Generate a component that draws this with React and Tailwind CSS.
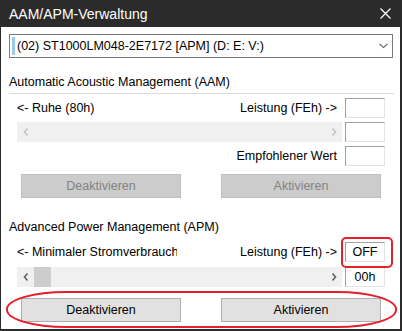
import React from "react";

const font = "font-['Liberation_Sans',Arial,sans-serif]";

function ArrowLeft({ color }) {
  return (
    <svg width="6" height="8" viewBox="0 0 6 8" className="shrink-0">
      <polyline points="4.5,0.5 1.5,4 4.5,7.5" fill="none" stroke={color} strokeWidth="1.6" />
    </svg>
  );
}

function ArrowRight({ color }) {
  return (
    <svg width="6" height="8" viewBox="0 0 6 8" className="shrink-0">
      <polyline points="1.5,0.5 4.5,4 1.5,7.5" fill="none" stroke={color} strokeWidth="1.6" />
    </svg>
  );
}

function ValueBox({ children }) {
  return (
    <div className="flex h-[20px] w-[40px] shrink-0 items-center justify-center border border-t-[#a0a0a0] border-l-[#a0a0a0] border-r-[#e3e3e3] border-b-[#e3e3e3] bg-white text-black">
      {children}
    </div>
  );
}

function ScrollBar({ enabled }) {
  const arrow = enabled ? "#606060" : "#c2c2c2";
  return (
    <div className="flex h-[20px] w-[325px] shrink-0 items-center bg-[#f0f0f0]">
      <div className="flex w-[17px] justify-center">
        <ArrowLeft color={arrow} />
      </div>
      {enabled ? <div className="h-full w-[17px] bg-[#cdcdcd]" /> : null}
      <div className="flex-1" />
      <div className="flex w-[17px] justify-center">
        <ArrowRight color={arrow} />
      </div>
    </div>
  );
}

function Button({ label, disabled }) {
  return (
    <div
      className={
        disabled
          ? "flex h-[24px] w-[160px] items-center justify-center border border-[#bfbfbf] bg-[#cccccc] text-[#838383]"
          : "flex h-[24px] w-[160px] items-center justify-center border border-[#adadad] bg-[#e1e1e1] text-black"
      }
    >
      {label}
    </div>
  );
}

function Header({ title, mt, line }) {
  return (
    <>
      <div className={`ml-[8px] h-[16px] leading-[16px] text-black ${mt}`}>{title}</div>
      <div className={`ml-[8px] mt-[3px] h-px w-[385px] ${line ? "bg-[#dcdcdc]" : "bg-transparent"}`} />
    </>
  );
}

export default function App() {
  return (
    <div className={`${font} flex h-[331px] w-[402px] flex-col bg-[#2b2b2b] pb-[2px] pl-px pr-[2px] text-[12.5px]`}>
      <div className="flex h-[27px] shrink-0 items-center justify-between pl-[8px] pr-[9px] pt-[2px] text-[14px] text-white">
        <span>AAM/APM-Verwaltung</span>
        <svg width="11" height="11" viewBox="0 0 11 11" className="mb-[2px]">
          <line x1="0.5" y1="0.5" x2="10.5" y2="10.5" stroke="#fff" strokeWidth="1.2" />
          <line x1="10.5" y1="0.5" x2="0.5" y2="10.5" stroke="#fff" strokeWidth="1.2" />
        </svg>
      </div>

      <div className="relative flex flex-1 flex-col bg-white">
        <div className="ml-[8px] mt-[7px] flex h-[24px] w-[384px] items-center border border-[#7a7a7a] pl-[2px] pr-[4px]">
          <div className="h-[18px] w-[3px] bg-[#99c9ef]" />
          <span className="ml-[2px] flex-1 text-black">(02) ST1000LM048-2E7172 [APM] (D: E: V:)</span>
          <svg width="9" height="6" viewBox="0 0 9 6">
            <polyline points="0.5,0.8 4.5,4.6 8.5,0.8" fill="none" stroke="#555" strokeWidth="1.1" />
          </svg>
        </div>

        <Header title="Automatic Acoustic Management (AAM)" mt="mt-[16px]" line />

        <div className="ml-[16px] mt-[4px] flex h-[20px] w-[368px] items-center">
          <span className="flex-1 text-black">&lt;- Ruhe (80h)</span>
          <span className="mr-[8px] text-black">Leistung (FEh) -&gt;</span>
          <ValueBox />
        </div>
        <div className="ml-[16px] mt-[4px] flex h-[20px] w-[368px] items-center gap-[3px]">
          <ScrollBar enabled={false} />
          <ValueBox />
        </div>
        <div className="ml-[16px] mt-[4px] flex h-[20px] w-[368px] items-center justify-end">
          <span className="mr-[8px] text-black">Empfohlener Wert</span>
          <ValueBox />
        </div>
        <div className="ml-[20px] mt-[8px] flex gap-[40px]">
          <Button label="Deaktivieren" disabled />
          <Button label="Aktivieren" disabled />
        </div>

        <Header title="Advanced Power Management (APM)" mt="mt-[21px]" />

        <div className="ml-[16px] mt-[3px] flex h-[20px] w-[368px] items-center">
          <span className="w-[160px] overflow-hidden whitespace-nowrap text-black">&lt;- Minimaler Stromverbrauch</span>
          <span className="flex-1" />
          <span className="mr-[8px] text-black">Leistung (FEh) -&gt;</span>
          <ValueBox>OFF</ValueBox>
        </div>
        <div className="ml-[16px] mt-[5px] flex h-[20px] w-[368px] items-center gap-[3px]">
          <ScrollBar enabled />
          <ValueBox>00h</ValueBox>
        </div>
        <div className="ml-[20px] mt-[11px] flex gap-[40px]">
          <Button label="Deaktivieren" />
          <Button label="Aktivieren" />
        </div>

        <div className="absolute left-[340px] top-[210px] h-[31px] w-[52px] rounded-[5px] border-2 border-[#e3202c]" />
        <div className="absolute left-[5px] top-[264px] h-[37px] w-[391px] rounded-[60px/18px] border-2 border-[#e3202c]" />
      </div>
    </div>
  );
}
